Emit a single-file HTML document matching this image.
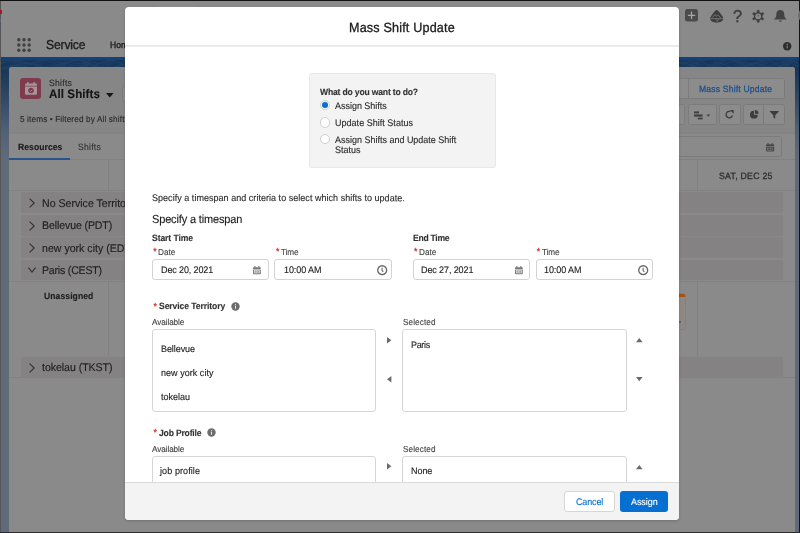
<!DOCTYPE html>
<html lang="en">
<head>
<meta charset="utf-8">
<title>Mass Shift Update</title>
<style>
html,body{margin:0;padding:0;}
body{width:800px;height:533px;position:relative;overflow:hidden;background:#8a8a8a;font-family:"Liberation Sans",sans-serif;}
.a{position:absolute;box-sizing:border-box;}
.t{position:absolute;white-space:pre;line-height:1;-webkit-text-stroke:0.12px currentColor;}
#page,#mcontent{will-change:transform;}
svg{position:absolute;overflow:visible;}
.row{position:absolute;left:21.2px;width:762px;background:#848282;border-radius:2px;}
.hl{position:absolute;height:1px;background:#838383;}
.vl{position:absolute;width:1px;background:#808080;}
.btn{position:absolute;box-sizing:border-box;border:1px solid #7b7b7b;border-radius:2.5px;background:#8c8c8c;}
.inp{position:absolute;box-sizing:border-box;border:1px solid #d3d3d3;border-radius:3px;background:#fff;height:21.4px;top:258.7px;}
.lb{position:absolute;box-sizing:border-box;border:1px solid #d6d6d6;border-radius:3px;background:#fff;}
.radio{position:absolute;box-sizing:border-box;width:10.6px;height:10.6px;border:1px solid #cfcfcf;border-radius:50%;background:#fff;}
</style>
</head>
<body>
<!-- ================= PAGE BEHIND THE BACKDROP ================= -->
<div id="page" class="a" style="left:0;top:0;width:800px;height:533px;">
  <!-- blue brand band + side strips -->
  <div class="a" style="left:0;top:57px;width:800px;height:476px;background:linear-gradient(180deg,#12427e 0px,#12427e 2.6px,#16375b 2.6px,#16375b 13px,#24405f 28px,#324a67 43px,#415570 58px,#506075 73px,#5a6678 88px,#606a79 103px,#606a7a 476px);"></div>
  <!-- topographic hints on band -->
  <svg width="800" height="11" style="left:0;top:59.6px;overflow:hidden" viewBox="0 0 800 11"><g fill="none" stroke="#26466a" stroke-width="0.6" opacity="0.85"><path d="M0.0 1.8L3.0 0.5L6.0 -0.7L9.0 -1.4L12.0 -1.5L15.0 -0.8L18.0 0.3L21.0 1.7L24.0 2.8L27.0 3.5L30.0 3.4L33.0 2.7L36.0 1.5L39.0 0.2L42.0 -1.0L45.0 -1.5L48.0 -1.4L51.0 -0.6L54.0 0.7L57.0 2.0L60.0 3.0L63.0 3.5L66.0 3.3L69.0 2.5L72.0 1.2L75.0 -0.1L78.0 -1.1L81.0 -1.6L84.0 -1.3L87.0 -0.3L90.0 1.0L93.0 2.3L96.0 3.2L99.0 3.6L102.0 3.2L105.0 2.2L108.0 0.9L111.0 -0.4L114.0 -1.3L117.0 -1.5L120.0 -1.1L123.0 -0.0L126.0 1.3"/><path d="M0.0 3.0L3.0 1.7L6.0 0.6L9.0 0.2L12.0 0.4L15.0 1.4L18.0 2.7L21.0 3.9L24.0 4.8L27.0 5.0L30.0 4.5L33.0 3.4L36.0 2.1L39.0 0.9L42.0 0.2L45.0 0.3L48.0 1.0L51.0 2.2L54.0 3.6L57.0 4.6L60.0 5.0L63.0 4.7L66.0 3.8L69.0 2.5L72.0 1.2L75.0 0.4L78.0 0.2L81.0 0.7L84.0 1.8L87.0 3.2L90.0 4.3L93.0 5.0L96.0 4.9L99.0 4.1L102.0 2.9L105.0 1.6L108.0 0.6L111.0 0.2L114.0 0.5L117.0 1.5L120.0 2.8L123.0 4.0L126.0 4.8"/><path d="M0.0 4.3L3.0 3.2L6.0 2.2L9.0 1.4L12.0 0.9L15.0 0.6L18.0 0.7L21.0 1.2L24.0 1.9L27.0 2.8L30.0 3.8L33.0 4.9L36.0 6.0L39.0 6.8L42.0 7.4L45.0 7.7L48.0 7.7L51.0 7.4L54.0 6.8L57.0 5.9L60.0 4.8L63.0 3.8L66.0 2.7L69.0 1.8L72.0 1.1L75.0 0.7L78.0 0.6L81.0 0.9L84.0 1.5L87.0 2.3L90.0 3.3L93.0 4.4L96.0 5.4L99.0 6.4L102.0 7.1L105.0 7.6L108.0 7.8L111.0 7.6L114.0 7.1L117.0 6.4L120.0 5.4L123.0 4.3L126.0 3.3"/><path d="M0.0 8.3L3.0 8.3L6.0 8.0L9.0 7.4L12.0 6.6L15.0 5.7L18.0 4.8L21.0 4.1L24.0 3.5L27.0 3.3L30.0 3.4L33.0 3.8L36.0 4.5L39.0 5.3L42.0 6.2L45.0 7.1L48.0 7.8L51.0 8.2L54.0 8.3L57.0 8.1L60.0 7.6L63.0 6.8L66.0 5.9L69.0 5.0L72.0 4.2L75.0 3.6L78.0 3.3L81.0 3.3L84.0 3.7L87.0 4.3L90.0 5.1L93.0 6.0L96.0 6.9L99.0 7.7L102.0 8.2L105.0 8.3L108.0 8.2L111.0 7.7L114.0 7.0L117.0 6.1L120.0 5.2L123.0 4.4L126.0 3.7"/><path d="M0.0 9.9L3.0 9.6L6.0 8.7L9.0 7.5L12.0 6.2L15.0 5.3L18.0 4.9L21.0 5.3L24.0 6.2L27.0 7.5L30.0 8.7L33.0 9.6L36.0 9.9L39.0 9.4L42.0 8.5L45.0 7.2L48.0 6.0L51.0 5.2L54.0 5.0L57.0 5.4L60.0 6.4L63.0 7.7L66.0 8.9L69.0 9.7L72.0 9.8L75.0 9.3L78.0 8.2L81.0 7.0L84.0 5.8L87.0 5.1L90.0 5.0L93.0 5.6L96.0 6.7L99.0 8.0L102.0 9.1L105.0 9.8L108.0 9.8L111.0 9.1L114.0 8.0L117.0 6.7L120.0 5.6L123.0 5.0L126.0 5.1"/><path d="M0.0 8.7L3.0 7.6L6.0 6.7L9.0 6.0L12.0 5.5L15.0 5.4L18.0 5.6L21.0 6.1L24.0 6.9L27.0 7.8L30.0 8.9L33.0 9.9L36.0 10.9L39.0 11.7L42.0 12.3L45.0 12.6L48.0 12.5L51.0 12.2L54.0 11.5L57.0 10.6L60.0 9.6L63.0 8.5L66.0 7.5L69.0 6.6L72.0 5.9L75.0 5.5L78.0 5.4L81.0 5.6L84.0 6.2L87.0 6.9L90.0 7.9L93.0 9.0L96.0 10.0L99.0 11.0L102.0 11.8L105.0 12.3L108.0 12.6L111.0 12.5L114.0 12.1L117.0 11.4L120.0 10.5L123.0 9.5L126.0 8.4"/><path d="M0.0 13.7L3.0 12.6L6.0 11.1L9.0 9.5L12.0 8.1L15.0 7.3L18.0 7.3L21.0 8.0L24.0 9.4L27.0 11.0L30.0 12.5L33.0 13.6L36.0 14.0L39.0 13.6L42.0 12.5L45.0 11.0L48.0 9.3L51.0 8.0L54.0 7.3L57.0 7.3L60.0 8.1L63.0 9.5L66.0 11.1L69.0 12.6L72.0 13.7L75.0 14.0L78.0 13.5L81.0 12.4L84.0 10.8L87.0 9.2L90.0 7.9L93.0 7.2L96.0 7.4L99.0 8.2L102.0 9.7L105.0 11.3L108.0 12.8L111.0 13.7L114.0 14.0L117.0 13.4L120.0 12.2L123.0 10.6L126.0 9.1"/><path d="M8.0 11L15.0 0"/><path d="M10.2 11L17.2 0"/><path d="M12.4 11L19.4 0"/><path d="M14.6 11L21.6 0"/><path d="M31.0 11L38.0 0"/><path d="M33.2 11L40.2 0"/><path d="M35.4 11L42.4 0"/><path d="M37.6 11L44.6 0"/><path d="M54.0 11L61.0 0"/><path d="M56.2 11L63.2 0"/><path d="M58.4 11L65.4 0"/><path d="M60.6 11L67.6 0"/><path d="M77.0 11L84.0 0"/><path d="M79.2 11L86.2 0"/><path d="M81.4 11L88.4 0"/><path d="M83.6 11L90.6 0"/><path d="M100.0 11L107.0 0"/><path d="M102.2 11L109.2 0"/><path d="M104.4 11L111.4 0"/><path d="M106.6 11L113.6 0"/><path d="M123.0 11L130.0 0"/><path d="M125.2 11L132.2 0"/><path d="M127.4 11L134.4 0"/><path d="M129.6 11L136.6 0"/><path d="M678.0 2.3L681.0 3.2L684.0 3.8L687.0 4.1L690.0 4.1L693.0 3.8L696.0 3.2L699.0 2.4L702.0 1.5L705.0 0.5L708.0 -0.5L711.0 -1.3L714.0 -1.8L717.0 -2.1L720.0 -2.1L723.0 -1.7L726.0 -1.1L729.0 -0.3L732.0 0.7L735.0 1.7L738.0 2.6L741.0 3.4L744.0 3.9L747.0 4.1L750.0 4.0L753.0 3.6L756.0 3.0L759.0 2.1L762.0 1.1L765.0 0.1L768.0 -0.8L771.0 -1.5L774.0 -2.0L777.0 -2.1L780.0 -2.0L783.0 -1.6L786.0 -0.9L789.0 0.0L792.0 1.0L795.0 2.0L798.0 2.9"/><path d="M678.0 6.1L681.0 5.7L684.0 4.3L687.0 2.5L690.0 0.7L693.0 -0.6L696.0 -0.9L699.0 -0.2L702.0 1.3L705.0 3.1L708.0 4.9L711.0 5.9L714.0 6.0L717.0 5.2L720.0 3.5L723.0 1.7L726.0 0.0L729.0 -0.8L732.0 -0.7L735.0 0.3L738.0 2.1L741.0 3.9L744.0 5.4L747.0 6.1L750.0 5.8L753.0 4.5L756.0 2.7L759.0 0.9L762.0 -0.5L765.0 -0.9L768.0 -0.4L771.0 1.0L774.0 2.9L777.0 4.7L780.0 5.8L783.0 6.1L786.0 5.3L789.0 3.8L792.0 1.9L795.0 0.2L798.0 -0.8"/><path d="M678.0 2.8L681.0 1.9L684.0 1.2L687.0 1.0L690.0 1.2L693.0 1.8L696.0 2.8L699.0 3.9L702.0 5.1L705.0 6.2L708.0 6.9L711.0 7.4L714.0 7.3L717.0 6.9L720.0 6.1L723.0 5.0L726.0 3.8L729.0 2.7L732.0 1.7L735.0 1.2L738.0 1.0L741.0 1.3L744.0 2.0L747.0 2.9L750.0 4.1L753.0 5.3L756.0 6.3L759.0 7.0L762.0 7.4L765.0 7.3L768.0 6.8L771.0 5.9L774.0 4.8L777.0 3.6L780.0 2.5L783.0 1.6L786.0 1.1L789.0 1.0L792.0 1.4L795.0 2.1L798.0 3.1"/><path d="M678.0 4.6L681.0 3.4L684.0 2.9L687.0 3.2L690.0 4.3L693.0 5.8L696.0 7.3L699.0 8.4L702.0 8.7L705.0 8.2L708.0 7.1L711.0 5.5L714.0 4.1L717.0 3.1L720.0 2.9L723.0 3.6L726.0 4.8L729.0 6.4L732.0 7.8L735.0 8.6L738.0 8.6L741.0 7.8L744.0 6.5L747.0 4.9L750.0 3.6L753.0 2.9L756.0 3.1L759.0 4.0L762.0 5.5L765.0 7.0L768.0 8.2L771.0 8.7L774.0 8.4L777.0 7.3L780.0 5.8L783.0 4.3L786.0 3.2L789.0 2.9L792.0 3.4L795.0 4.6L798.0 6.1"/><path d="M678.0 10.9L681.0 10.6L684.0 10.0L687.0 9.0L690.0 7.7L693.0 6.5L696.0 5.4L699.0 4.5L702.0 4.0L705.0 3.9L708.0 4.3L711.0 5.1L714.0 6.2L717.0 7.5L720.0 8.7L723.0 9.8L726.0 10.5L729.0 10.9L732.0 10.8L735.0 10.2L738.0 9.3L741.0 8.2L744.0 6.9L747.0 5.7L750.0 4.8L753.0 4.1L756.0 3.9L759.0 4.1L762.0 4.8L765.0 5.8L768.0 7.0L771.0 8.3L774.0 9.4L777.0 10.3L780.0 10.8L783.0 10.9L786.0 10.5L789.0 9.7L792.0 8.6L795.0 7.4L798.0 6.1"/><path d="M678.0 9.9L681.0 8.6L684.0 7.4L687.0 6.4L690.0 5.7L693.0 5.4L696.0 5.6L699.0 6.2L702.0 7.1L705.0 8.3L708.0 9.6L711.0 10.8L714.0 11.7L717.0 12.4L720.0 12.6L723.0 12.3L726.0 11.7L729.0 10.7L732.0 9.5L735.0 8.2L738.0 7.0L741.0 6.1L744.0 5.6L747.0 5.4L750.0 5.8L753.0 6.5L756.0 7.5L759.0 8.7L762.0 10.0L765.0 11.1L768.0 12.0L771.0 12.5L774.0 12.5L777.0 12.1L780.0 11.4L783.0 10.3L786.0 9.0L789.0 7.8L792.0 6.7L795.0 5.9L798.0 5.5"/><path d="M678.0 7.2L681.0 7.2L684.0 7.8L687.0 8.7L690.0 9.9L693.0 11.2L696.0 12.4L699.0 13.4L702.0 13.9L705.0 14.1L708.0 13.7L711.0 12.9L714.0 11.8L717.0 10.5L720.0 9.3L723.0 8.2L726.0 7.5L729.0 7.1L732.0 7.3L735.0 7.9L738.0 8.9L741.0 10.1L744.0 11.4L747.0 12.6L750.0 13.5L753.0 14.0L756.0 14.0L759.0 13.6L762.0 12.8L765.0 11.6L768.0 10.4L771.0 9.1L774.0 8.1L777.0 7.4L780.0 7.1L783.0 7.4L786.0 8.0L789.0 9.0L792.0 10.3L795.0 11.6L798.0 12.7"/><path d="M686.0 11L693.0 0"/><path d="M688.2 11L695.2 0"/><path d="M690.4 11L697.4 0"/><path d="M692.6 11L699.6 0"/><path d="M709.0 11L716.0 0"/><path d="M711.2 11L718.2 0"/><path d="M713.4 11L720.4 0"/><path d="M715.6 11L722.6 0"/><path d="M732.0 11L739.0 0"/><path d="M734.2 11L741.2 0"/><path d="M736.4 11L743.4 0"/><path d="M738.6 11L745.6 0"/><path d="M755.0 11L762.0 0"/><path d="M757.2 11L764.2 0"/><path d="M759.4 11L766.4 0"/><path d="M761.6 11L768.6 0"/><path d="M778.0 11L785.0 0"/><path d="M780.2 11L787.2 0"/><path d="M782.4 11L789.4 0"/><path d="M784.6 11L791.6 0"/></g></svg>
  <!-- list card -->
  <div class="a" style="left:9.4px;top:67.4px;width:786.1px;height:470px;background:#8a8a8a;border-radius:3px 3px 0 0;overflow:hidden;">
    <div class="a" style="left:0;top:0;width:100%;height:65.1px;background:#868686;"></div>
  </div>
  <!-- left/right dark edges -->
  <div class="a" style="left:0;top:0;width:1.1px;height:533px;background:#565659;"></div>
  <div class="a" style="left:0;top:10px;width:1.6px;height:4px;background:#a01f16;"></div>
  <div class="a" style="left:0;top:18.5px;width:1.3px;height:3px;background:#4a6a8a;"></div>
  <div class="a" style="left:799px;top:1px;width:1px;height:532px;background:#141414;"></div>
  <div class="a" style="left:0;top:0;width:800px;height:1.1px;background:#111;"></div>
  <div class="a" style="left:0;top:531.8px;width:800px;height:1.2px;background:#2c2c2e;"></div>

  <div class="a" style="left:153.5px;top:5.6px;width:42px;height:8px;border:1px solid #909090;border-radius:3px;"></div>
  <!-- app launcher -->
  <svg width="14" height="14" style="left:17px;top:37.8px" viewBox="0 0 14 14"><g fill="#404040"><circle cx="1.8" cy="1.8" r="1.7"/><circle cx="7" cy="1.8" r="1.7"/><circle cx="12.2" cy="1.8" r="1.7"/><circle cx="1.8" cy="7" r="1.7"/><circle cx="7" cy="7" r="1.7"/><circle cx="12.2" cy="7" r="1.7"/><circle cx="1.8" cy="12.2" r="1.7"/><circle cx="7" cy="12.2" r="1.7"/><circle cx="12.2" cy="12.2" r="1.7"/></g></svg>

  <!-- global header icons -->
  <svg width="13" height="12.6" style="left:685px;top:9.2px" viewBox="0 0 13 12.6"><rect width="13" height="12.6" rx="2.4" fill="#4b4b4b"/><path d="M6.5 2.6v7.4M2.8 6.3h7.4" stroke="#a6a6a6" stroke-width="1.3" fill="none"/></svg>
  <svg width="13.4" height="12.8" style="left:710px;top:9.8px" viewBox="0 0 13.4 12.8"><path d="M6.7 0.1C7.7 0.1 8.6 1 9.7 2.6C11 4.5 13.2 6.6 13.2 8.6C13.2 11.2 10.2 12.7 6.7 12.7C3.2 12.7 0.2 11.2 0.2 8.6C0.2 6.6 2.4 4.5 3.7 2.6C4.8 1 5.7 0.1 6.7 0.1Z" fill="#3e3e3e"/><path d="M0.6 8.7H12.8" stroke="#808080" stroke-width="0.8"/><path d="M2.2 7.6L5 4.6L6.4 6.4L7.8 5L10.8 7.8" fill="none" stroke="#7c7c7c" stroke-width="0.8"/><path d="M6 9L7 10.4L9 9.4M7 10.4L7.4 12.4" fill="none" stroke="#7c7c7c" stroke-width="0.7"/></svg>
  <span class="t" style="left:733.1px;top:8px;font-size:16.5px;color:#3f3f3f;-webkit-text-stroke:0.45px #3f3f3f;">?</span>
  <svg width="12.4" height="12.6" style="left:752.25px;top:9.8px" viewBox="-6.2 -6.3 12.4 12.6"><path d="M-1.20 -3.92L-0.85 -6.04L0.85 -6.04L1.20 -3.92L2.80 -3.00L4.81 -3.76L5.66 -2.29L3.99 -0.92L3.99 0.92L5.66 2.29L4.81 3.76L2.80 3.00L1.20 3.92L0.85 6.04L-0.85 6.04L-1.20 3.92L-2.80 3.00L-4.81 3.76L-5.66 2.29L-3.99 0.92L-3.99 -0.92L-5.66 -2.29L-4.81 -3.76L-2.80 -3.00Z" fill="#3f3f3f" stroke="#3f3f3f" stroke-width="0.5" stroke-linejoin="round"/><circle r="2.9" fill="#8a8a8a"/><circle cy="-0.5" r="0.7" fill="#4a4a4a"/></svg>
  <svg width="12.6" height="12" style="left:773.5px;top:10.1px" viewBox="0 0 12.6 12"><path d="M6.3 0C3.6 0 2.3 2 2.3 4.4C2.3 6.8 1.6 8 0.2 8.9V9.6H12.4V8.9C11 8 10.3 6.8 10.3 4.4C10.3 2 9 0 6.3 0Z" fill="#434343"/><path d="M5 10.4H7.6C7.6 11.2 7 11.8 6.3 11.8C5.6 11.8 5 11.2 5 10.4Z" fill="#434343"/></svg>
  <div class="a" style="left:797.7px;top:7.5px;width:15px;height:15px;border-radius:50%;background:#6b6b6b;"></div>
  <!-- info dot -->
  <svg width="8.4" height="8.4" style="left:783.3px;top:42.2px" viewBox="0 0 8.4 8.4"><circle cx="4.2" cy="4.2" r="4.2" fill="#2d2d2d"/><rect x="3.65" y="3.5" width="1.1" height="2.9" fill="#858585"/><circle cx="4.2" cy="2.3" r="0.7" fill="#858585"/></svg>

  <!-- Shifts object icon -->
  <div class="a" style="left:20.1px;top:78.1px;width:21px;height:21.2px;border-radius:3px;background:#803a4e;"></div>
  <svg width="12" height="12.8" style="left:24.8px;top:82.3px" viewBox="0 0 12 12.8"><g fill="#a3969b"><rect x="0" y="1.5" width="12" height="2.3" rx="0.8"/><rect x="2.1" y="0" width="1.7" height="2.6" rx="0.7"/><rect x="8.2" y="0" width="1.7" height="2.6" rx="0.7"/><path d="M0 4.5H12V11.7C12 12.3 11.5 12.8 10.9 12.8H1.1C0.5 12.8 0 12.3 0 11.7Z"/></g><circle cx="6" cy="8.6" r="2.75" fill="#803a4e"/><path d="M4.7 8.6L5.6 9.5L7.3 7.7" stroke="#a3969b" stroke-width="0.8" fill="none"/></svg>
  <svg width="7.6" height="4.6" style="left:106px;top:92.5px" viewBox="0 0 7.6 4.6"><path d="M0 0H7.6L3.8 4.6Z" fill="#161616"/></svg>
  <div class="btn" style="left:121.8px;top:86.4px;width:20px;height:15.6px;"></div>

  <!-- header buttons (right) -->
  <div class="btn" style="left:640px;top:78px;width:49px;height:21px;border-radius:2.5px 0 0 2.5px;"></div>
  <div class="btn" style="left:688px;top:78px;width:96.5px;height:21px;border-radius:0 2.5px 2.5px 0;"></div>
  <div class="btn" style="left:660px;top:104px;width:25px;height:21px;"></div>
  <div class="btn" style="left:688px;top:104px;width:29px;height:21px;"></div>
  <div class="btn" style="left:719px;top:104px;width:22px;height:21px;"></div>
  <div class="btn" style="left:743px;top:104px;width:41.5px;height:21px;"></div>
  <div class="vl" style="left:763.4px;top:104px;height:21px;background:#7b7b7b;"></div>
  <!-- gantt icon -->
  <svg width="17" height="9" style="left:693.6px;top:110.6px" viewBox="0 0 17 9"><g fill="#414141"><rect x="0" y="0.4" width="5" height="2"/><rect x="0" y="3.4" width="8.6" height="2.2"/><rect x="3.8" y="6.6" width="4.8" height="1.8"/><path d="M12.4 3.4H16.4L14.4 5.8Z"/></g></svg>
  <!-- refresh -->
  <svg width="9" height="9" style="left:725.3px;top:109.8px" viewBox="0 0 9 9"><path d="M7.4 5.3A3.2 3.2 0 1 1 5.4 1.6" fill="none" stroke="#3e3e3e" stroke-width="1.35"/><path d="M4.9 0H8.6V3.7Z" fill="#3e3e3e"/></svg>
  <!-- pie chart -->
  <svg width="8.6" height="8.6" style="left:749.7px;top:109.9px" viewBox="0 0 8.6 8.6"><path d="M3.9 0.8A3.9 3.9 0 1 0 7.8 4.7H3.9Z" fill="#3c3c3c"/><path d="M4.9 0A3.7 3.7 0 0 1 8.6 3.7H4.9Z" fill="#3c3c3c"/></svg>
  <!-- filter -->
  <svg width="8.6" height="7.8" style="left:769.5px;top:110.6px" viewBox="0 0 8.6 7.8"><path d="M0 0H8.6V0.8L5.2 4.2V7.8L3.4 6.6V4.2L0 0.8Z" fill="#3c3c3c"/></svg>

  <!-- date picker input -->
  <div class="btn" style="left:600px;top:136.2px;width:181.8px;height:20.8px;background:#8a8a8a;"></div>
  <svg width="8.2" height="8.6" style="left:765.9px;top:143.3px" viewBox="0 0 8.2 8.6"><g fill="#4a4a4a"><rect x="0" y="1.2" width="8.2" height="2" rx="0.5"/><rect x="1.4" y="0" width="1.2" height="2" rx="0.4"/><rect x="5.6" y="0" width="1.2" height="2" rx="0.4"/><path d="M0 3.8H8.2V7.8C8.2 8.2 7.9 8.6 7.4 8.6H0.8C0.3 8.6 0 8.2 0 7.8Z"/></g><rect x="1.5" y="5" width="5.2" height="2.2" fill="none" stroke="#8a8a8a" stroke-width="0.5"/><path d="M4.1 5V7.2" stroke="#8a8a8a" stroke-width="0.5"/></svg>

  <!-- lines -->
  <svg width="786" height="3" style="left:9.4px;top:131px" viewBox="0 0 786 3"><rect x="0" y="1.5" width="786" height="1" fill="#7d7d7d"/></svg>
  <div class="hl" style="left:9.4px;top:159.4px;width:786px;background:#808080;"></div>
  <div class="a" style="left:9.4px;top:158.2px;width:61px;height:2px;background:#28538f;"></div>
  <div class="hl" style="left:9.4px;top:190px;width:786px;background:#828282;"></div>
  <div class="hl" style="left:9.4px;top:281.2px;width:786px;background:#828282;"></div>
  <div class="hl" style="left:9.4px;top:377.2px;width:786px;background:#808080;"></div>
  <div class="vl" style="left:108px;top:160px;height:30px;"></div>
  <div class="vl" style="left:108px;top:281px;height:75px;"></div>
  <div class="vl" style="left:697.2px;top:160px;height:30px;"></div>
  <div class="vl" style="left:697.2px;top:281px;height:75px;"></div>

  <!-- territory rows -->
  <div class="row" style="top:191.8px;height:21.5px;"></div>
  <div class="row" style="top:214.9px;height:20.7px;"></div>
  <div class="row" style="top:237.1px;height:20.5px;"></div>
  <div class="row" style="top:259.6px;height:20.9px;"></div>
  <div class="row" style="top:356.8px;height:21.3px;"></div>
  <!-- chevrons -->
  <svg width="6" height="10" style="left:28.8px;top:198.4px" viewBox="0 0 6 10"><path d="M0.6 0.6L5.2 5L0.6 9.4" fill="none" stroke="#333" stroke-width="1.1"/></svg>
  <svg width="6" height="10" style="left:28.8px;top:220.8px" viewBox="0 0 6 10"><path d="M0.6 0.6L5.2 5L0.6 9.4" fill="none" stroke="#333" stroke-width="1.1"/></svg>
  <svg width="6" height="10" style="left:28.8px;top:243.2px" viewBox="0 0 6 10"><path d="M0.6 0.6L5.2 5L0.6 9.4" fill="none" stroke="#333" stroke-width="1.1"/></svg>
  <svg width="8" height="6" style="left:28px;top:267.2px" viewBox="0 0 8 6"><path d="M0.4 0.6L4 5.2L7.6 0.6" fill="none" stroke="#333" stroke-width="1.1"/></svg>
  <svg width="6" height="10" style="left:28.8px;top:363px" viewBox="0 0 6 10"><path d="M0.6 0.6L5.2 5L0.6 9.4" fill="none" stroke="#333" stroke-width="1.1"/></svg>

  <!-- orange shift card -->
  <div class="a" style="left:660px;top:293.3px;width:26.2px;height:36.4px;border-radius:2.5px;background:#8e8984;border:0.6px solid #86807b;overflow:hidden;"><div class="a" style="left:0;top:0;width:100%;height:2.9px;background:#aa5210;"></div></div>
  <div class="a" style="left:679.3px;top:321.2px;width:1.5px;height:1.7px;background:#4c688e;"></div>

<span class="t" style="left:45.70px;top:39.00px;font-size:12.2px;color:#1c1c1c;letter-spacing:-0.191px;transform-origin:0 10.00px;transform:scaleY(1.06) rotate(0.03deg);-webkit-text-stroke:0.3px #1c1c1c;">Service</span>
<span class="t" style="left:109.60px;top:40.70px;font-size:8.6px;color:#1a1a1a;transform-origin:0 7.00px;transform:scaleY(1.06) rotate(0.03deg);-webkit-text-stroke:0.3px #1a1a1a;">Home</span>
<span class="t" style="left:49.00px;top:79.20px;font-size:8.6px;color:#2a2a2a;letter-spacing:0.273px;transform-origin:0 7.00px;transform:scaleY(1.06) rotate(0.03deg);">Shifts</span>
<span class="t" style="left:49.00px;top:88.10px;font-size:11.6px;color:#141414;font-weight:700;letter-spacing:0.079px;transform-origin:0 10.00px;transform:scaleY(1.06) rotate(0.03deg);">All Shifts</span>
<span class="t" style="left:20.30px;top:116.40px;font-size:8.2px;color:#2a2a2a;letter-spacing:0.139px;transform-origin:0 6.00px;transform:scaleY(1.06) rotate(0.03deg);">5 items • Filtered by All shifts • Updated a few seconds ago</span>
<span class="t" style="left:17.60px;top:143.20px;font-size:8.6px;color:#1a1a1a;font-weight:700;letter-spacing:0.053px;transform-origin:0 7.00px;transform:scaleY(1.06) rotate(0.03deg);">Resources</span>
<span class="t" style="left:78.00px;top:143.20px;font-size:8.6px;color:#333;letter-spacing:0.236px;transform-origin:0 7.00px;transform:scaleY(1.06) rotate(0.03deg);">Shifts</span>
<span class="t" style="left:42.00px;top:197.60px;font-size:10.6px;color:#1e1e1e;transform-origin:0 9.00px;transform:scaleY(1.06) rotate(0.03deg);">No Service Territory</span>
<span class="t" style="left:42.00px;top:220.10px;font-size:10.6px;color:#1e1e1e;letter-spacing:-0.121px;transform-origin:0 9.00px;transform:scaleY(1.06) rotate(0.03deg);">Bellevue (PDT)</span>
<span class="t" style="left:42.00px;top:242.60px;font-size:10.6px;color:#1e1e1e;transform-origin:0 9.00px;transform:scaleY(1.06) rotate(0.03deg);">new york city (EDT)</span>
<span class="t" style="left:42.30px;top:265.10px;font-size:10.6px;color:#1e1e1e;letter-spacing:-0.208px;transform-origin:0 9.00px;transform:scaleY(1.06) rotate(0.03deg);">Paris (CEST)</span>
<span class="t" style="left:42.00px;top:362.00px;font-size:10.6px;color:#1e1e1e;letter-spacing:-0.054px;transform-origin:0 9.00px;transform:scaleY(1.06) rotate(0.03deg);">tokelau (TKST)</span>
<span class="t" style="left:44.10px;top:292.40px;font-size:8.6px;color:#1e1e1e;font-weight:700;letter-spacing:0.072px;transform-origin:0 7.00px;transform:scaleY(1.06) rotate(0.03deg);">Unassigned</span>
<span class="t" style="left:699.40px;top:85.40px;font-size:8.6px;color:#1d4f88;letter-spacing:0.175px;transform-origin:0 7.00px;transform:scaleY(1.06) rotate(0.03deg);-webkit-text-stroke:0.25px #1d4f88;">Mass Shift Update</span>
<span class="t" style="left:719.00px;top:172.20px;font-size:8.7px;color:#2e2e2e;letter-spacing:0.281px;transform-origin:0 7.00px;transform:scaleY(1.06) rotate(0.03deg);-webkit-text-stroke:0.3px #2e2e2e;">SAT, DEC 25</span>
</div>

<!-- ================= MODAL ================= -->
<div id="modal" class="a" style="left:125.3px;top:7px;width:553.3px;height:512.8px;background:#fff;border-radius:4px;overflow:hidden;box-shadow:0 1px 3px rgba(0,0,0,.18);">
  <div class="a" style="left:0;top:38px;width:100%;height:2px;background:linear-gradient(180deg,#e6e6e6,#eeeeee);"></div>
  <!-- job profile list boxes (clipped by footer) -->
  <div class="lb" style="left:26.3px;top:449.2px;width:224.4px;height:60px;"></div>
  <div class="lb" style="left:276.7px;top:449.2px;width:225px;height:60px;"></div>
  <!-- footer -->
  <div class="a" style="left:0;top:474.6px;width:100%;height:39px;background:#f3f3f3;border-top:1px solid #dcdcdc;"></div>
  <div class="a" style="left:438.9px;top:484.1px;width:50.6px;height:21.3px;background:#fff;border:1px solid #d6d6d6;border-radius:3px;"></div>
  <div class="a" style="left:494.5px;top:484.1px;width:48.6px;height:21.3px;background:#0570d2;border-radius:3px;"></div>
</div>

<div id="mcontent" class="a" style="left:0;top:0;width:800px;height:533px;">
  <!-- radio group panel -->
  <div class="a" style="left:308.8px;top:72.7px;width:187.6px;height:94.9px;background:#f3f3f3;border:1px solid #e8e8e8;border-radius:3px;"></div>
  <div class="radio" style="left:319.8px;top:99.9px;"><div class="a" style="left:1.5px;top:1.5px;width:5.6px;height:5.6px;border-radius:50%;background:#0a6fd1;"></div></div>
  <div class="radio" style="left:319.8px;top:117.3px;"></div>
  <div class="radio" style="left:319.8px;top:133.8px;"></div>

  <!-- date/time inputs -->
  <div class="inp" style="left:152.2px;width:117px;"></div>
  <div class="inp" style="left:274.4px;width:117.4px;"></div>
  <div class="inp" style="left:413px;width:117.2px;"></div>
  <div class="inp" style="left:535.8px;width:117px;"></div>
  <!-- calendar icons -->
  <svg width="7.8" height="8.2" style="left:253.4px;top:265.8px" viewBox="0 0 8.2 8.6"><g><g fill="#7a7a7a"><rect x="0" y="1.2" width="8.2" height="2" rx="0.5"/><rect x="1.4" y="0" width="1.2" height="2" rx="0.4"/><rect x="5.6" y="0" width="1.2" height="2" rx="0.4"/><path d="M0 3.8H8.2V7.8C8.2 8.2 7.9 8.6 7.4 8.6H0.8C0.3 8.6 0 8.2 0 7.8Z"/></g><rect x="1.5" y="4.9" width="5.2" height="2.4" fill="none" stroke="#fff" stroke-width="0.55"/><path d="M4.1 4.9V7.3M1.5 6.1H6.7" stroke="#fff" stroke-width="0.5"/></g></svg>
  <svg width="7.8" height="8.2" style="left:514.6px;top:265.8px" viewBox="0 0 8.2 8.6"><g><g fill="#7a7a7a"><rect x="0" y="1.2" width="8.2" height="2" rx="0.5"/><rect x="1.4" y="0" width="1.2" height="2" rx="0.4"/><rect x="5.6" y="0" width="1.2" height="2" rx="0.4"/><path d="M0 3.8H8.2V7.8C8.2 8.2 7.9 8.6 7.4 8.6H0.8C0.3 8.6 0 8.2 0 7.8Z"/></g><rect x="1.5" y="4.9" width="5.2" height="2.4" fill="none" stroke="#fff" stroke-width="0.55"/><path d="M4.1 4.9V7.3M1.5 6.1H6.7" stroke="#fff" stroke-width="0.5"/></g></svg>
  
  <!-- clock icons -->
  <svg width="10.4" height="10.4" style="left:377.2px;top:264.8px" viewBox="0 0 9.2 9.2"><g><circle cx="4.6" cy="4.6" r="3.95" fill="none" stroke="#686868" stroke-width="1.2"/><path d="M4.5 2.5V4.7L5.5 6.2" fill="none" stroke="#686868" stroke-width="1"/></g></svg>
  <svg width="10.4" height="10.4" style="left:638.2px;top:264.8px" viewBox="0 0 9.2 9.2"><g><circle cx="4.6" cy="4.6" r="3.95" fill="none" stroke="#686868" stroke-width="1.2"/><path d="M4.5 2.5V4.7L5.5 6.2" fill="none" stroke="#686868" stroke-width="1"/></g></svg>
  <!-- info icons -->
  <svg width="9" height="9" style="left:231px;top:301.9px" viewBox="0 0 9 9"><g><circle cx="4.5" cy="4.5" r="4.2" fill="#6e6e6e"/><rect x="4" y="3.9" width="1" height="2.8" fill="#e6e6e6"/><circle cx="4.5" cy="2.7" r="0.6" fill="#e6e6e6"/></g></svg>
  <svg width="9" height="9" style="left:206.9px;top:428.2px" viewBox="0 0 9 9"><g><circle cx="4.5" cy="4.5" r="4.2" fill="#6e6e6e"/><rect x="4" y="3.9" width="1" height="2.8" fill="#e6e6e6"/><circle cx="4.5" cy="2.7" r="0.6" fill="#e6e6e6"/></g></svg>

  <!-- service territory list boxes -->
  <div class="lb" style="left:151.6px;top:329.4px;width:224.4px;height:82.3px;"></div>
  <div class="lb" style="left:402px;top:329.4px;width:225px;height:82.3px;"></div>
  <!-- move arrows -->
  <svg width="4.4" height="6.6" style="left:386.8px;top:336.5px" viewBox="0 0 4.4 6.6"><path d="M0 0L4.4 3.3L0 6.6Z" fill="#6b6b6b"/></svg>
  <svg width="4.4" height="6.6" style="left:386.6px;top:376.4px" viewBox="0 0 4.4 6.6"><path d="M4.4 0L0 3.3L4.4 6.6Z" fill="#6b6b6b"/></svg>
  <svg width="6.6" height="4.2" style="left:635.7px;top:338.1px" viewBox="0 0 6.6 4.2"><path d="M0 4.2L3.3 0L6.6 4.2Z" fill="#6b6b6b"/></svg>
  <svg width="6.6" height="4.2" style="left:635.7px;top:377.3px" viewBox="0 0 6.6 4.2"><path d="M0 0L3.3 4.2L6.6 0Z" fill="#6b6b6b"/></svg>
  <svg width="4.4" height="6.6" style="left:386.8px;top:463.4px" viewBox="0 0 4.4 6.6"><path d="M0 0L4.4 3.3L0 6.6Z" fill="#6b6b6b"/></svg>
  <svg width="6.6" height="4.2" style="left:635.7px;top:464.6px" viewBox="0 0 6.6 4.2"><path d="M0 4.2L3.3 0L6.6 4.2Z" fill="#6b6b6b"/></svg>

<span class="t" style="left:349.30px;top:21.60px;font-size:12.6px;color:#1a1a1a;letter-spacing:0.175px;transform-origin:0 10.00px;transform:scaleY(1.06) rotate(0.03deg);-webkit-text-stroke:0.3px #1a1a1a;">Mass Shift Update</span>
<span class="t" style="left:319.50px;top:88.45px;font-size:8.6px;color:#333;font-weight:700;letter-spacing:-0.185px;transform-origin:0 7.00px;transform:scaleY(1.06) rotate(0.03deg);">What do you want to do?</span>
<span class="t" style="left:335.40px;top:101.80px;font-size:9px;color:#2b2b2b;letter-spacing:-0.026px;transform-origin:0 7.00px;transform:scaleY(1.06) rotate(0.03deg);">Assign Shifts</span>
<span class="t" style="left:335.40px;top:119.00px;font-size:9px;color:#2b2b2b;letter-spacing:0.024px;transform-origin:0 7.00px;transform:scaleY(1.06) rotate(0.03deg);">Update Shift Status</span>
<span class="t" style="left:335.40px;top:135.50px;font-size:9px;color:#2b2b2b;letter-spacing:-0.009px;transform-origin:0 7.00px;transform:scaleY(1.06) rotate(0.03deg);">Assign Shifts and Update Shift</span>
<span class="t" style="left:335.40px;top:145.70px;font-size:9px;color:#2b2b2b;letter-spacing:-0.021px;transform-origin:0 7.00px;transform:scaleY(1.06) rotate(0.03deg);">Status</span>
<span class="t" style="left:152.20px;top:193.90px;font-size:9px;color:#2b2b2b;letter-spacing:0.033px;transform-origin:0 7.00px;transform:scaleY(1.06) rotate(0.03deg);">Specify a timespan and criteria to select which shifts to update.</span>
<span class="t" style="left:152.30px;top:213.70px;font-size:11px;color:#1a1a1a;letter-spacing:-0.156px;transform-origin:0 9.00px;transform:scaleY(1.06) rotate(0.03deg);">Specify a timespan</span>
<span class="t" style="left:152.20px;top:233.80px;font-size:8.6px;color:#333;font-weight:700;letter-spacing:-0.092px;transform-origin:0 7.00px;transform:scaleY(1.06) rotate(0.03deg);">Start Time</span>
<span class="t" style="left:413.10px;top:233.70px;font-size:8.6px;color:#333;font-weight:700;letter-spacing:-0.284px;transform-origin:0 7.00px;transform:scaleY(1.06) rotate(0.03deg);">End Time</span>
<span class="t" style="left:158.20px;top:248.70px;font-size:8.2px;color:#444;letter-spacing:-0.028px;transform-origin:0 6.00px;transform:scaleY(1.06) rotate(0.03deg);">Date</span>
<span class="t" style="left:281.00px;top:248.70px;font-size:8.2px;color:#444;letter-spacing:-0.112px;transform-origin:0 6.00px;transform:scaleY(1.06) rotate(0.03deg);">Time</span>
<span class="t" style="left:419.20px;top:248.70px;font-size:8.2px;color:#444;letter-spacing:-0.028px;transform-origin:0 6.00px;transform:scaleY(1.06) rotate(0.03deg);">Date</span>
<span class="t" style="left:541.80px;top:248.70px;font-size:8.2px;color:#444;letter-spacing:-0.112px;transform-origin:0 6.00px;transform:scaleY(1.06) rotate(0.03deg);">Time</span>
<span class="t" style="left:160.60px;top:266.00px;font-size:9px;color:#222;letter-spacing:-0.117px;transform-origin:0 7.00px;transform:scaleY(1.06) rotate(0.03deg);">Dec 20, 2021</span>
<span class="t" style="left:283.50px;top:266.00px;font-size:9px;color:#222;letter-spacing:-0.071px;transform-origin:0 7.00px;transform:scaleY(1.06) rotate(0.03deg);">10:00 AM</span>
<span class="t" style="left:421.40px;top:266.00px;font-size:9px;color:#222;letter-spacing:-0.100px;transform-origin:0 7.00px;transform:scaleY(1.06) rotate(0.03deg);">Dec 27, 2021</span>
<span class="t" style="left:544.20px;top:266.00px;font-size:9px;color:#222;letter-spacing:-0.071px;transform-origin:0 7.00px;transform:scaleY(1.06) rotate(0.03deg);">10:00 AM</span>
<span class="t" style="left:158.70px;top:302.30px;font-size:8.6px;color:#333;font-weight:700;letter-spacing:-0.089px;transform-origin:0 7.00px;transform:scaleY(1.06) rotate(0.03deg);">Service Territory</span>
<span class="t" style="left:152.20px;top:319.10px;font-size:8.2px;color:#444;letter-spacing:-0.092px;transform-origin:0 6.00px;transform:scaleY(1.06) rotate(0.03deg);">Available</span>
<span class="t" style="left:402.60px;top:318.90px;font-size:8.2px;color:#444;letter-spacing:0.083px;transform-origin:0 6.00px;transform:scaleY(1.06) rotate(0.03deg);">Selected</span>
<span class="t" style="left:160.60px;top:344.50px;font-size:9px;color:#222;letter-spacing:-0.071px;transform-origin:0 7.00px;transform:scaleY(1.06) rotate(0.03deg);">Bellevue</span>
<span class="t" style="left:160.50px;top:368.60px;font-size:9px;color:#222;letter-spacing:0.039px;transform-origin:0 7.00px;transform:scaleY(1.06) rotate(0.03deg);">new york city</span>
<span class="t" style="left:160.50px;top:392.60px;font-size:9px;color:#222;letter-spacing:-0.005px;transform-origin:0 7.00px;transform:scaleY(1.06) rotate(0.03deg);">tokelau</span>
<span class="t" style="left:411.10px;top:340.90px;font-size:9px;color:#222;letter-spacing:-0.337px;transform-origin:0 7.00px;transform:scaleY(1.06) rotate(0.03deg);">Paris</span>
<span class="t" style="left:158.70px;top:429.00px;font-size:8.6px;color:#333;font-weight:700;letter-spacing:-0.193px;transform-origin:0 7.00px;transform:scaleY(1.06) rotate(0.03deg);">Job Profile</span>
<span class="t" style="left:152.20px;top:445.80px;font-size:8.2px;color:#444;letter-spacing:-0.092px;transform-origin:0 6.00px;transform:scaleY(1.06) rotate(0.03deg);">Available</span>
<span class="t" style="left:402.60px;top:445.80px;font-size:8.2px;color:#444;letter-spacing:0.083px;transform-origin:0 6.00px;transform:scaleY(1.06) rotate(0.03deg);">Selected</span>
<span class="t" style="left:160.40px;top:467.10px;font-size:9px;color:#222;letter-spacing:0.092px;transform-origin:0 7.00px;transform:scaleY(1.06) rotate(0.03deg);">job profile</span>
<span class="t" style="left:410.90px;top:467.10px;font-size:9px;color:#222;letter-spacing:-0.062px;transform-origin:0 7.00px;transform:scaleY(1.06) rotate(0.03deg);">None</span>
<span class="t" style="left:575.75px;top:498.15px;font-size:9px;color:#0b6fd0;letter-spacing:-0.130px;transform-origin:0 7.00px;transform:scaleY(1.06) rotate(0.03deg);">Cancel</span>
<span class="t" style="left:630.90px;top:498.15px;font-size:9px;color:#ffffff;letter-spacing:-0.076px;transform-origin:0 7.00px;transform:scaleY(1.06) rotate(0.03deg);">Assign</span>
<span class="t" style="left:153.28px;top:246.93px;font-size:8.8px;color:#d23a2f;-webkit-text-stroke:0.3px #d23a2f;">*</span>
<span class="t" style="left:275.88px;top:246.93px;font-size:8.8px;color:#d23a2f;-webkit-text-stroke:0.3px #d23a2f;">*</span>
<span class="t" style="left:414.08px;top:246.93px;font-size:8.8px;color:#d23a2f;-webkit-text-stroke:0.3px #d23a2f;">*</span>
<span class="t" style="left:536.68px;top:246.93px;font-size:8.8px;color:#d23a2f;-webkit-text-stroke:0.3px #d23a2f;">*</span>
<span class="t" style="left:153.38px;top:301.63px;font-size:8.8px;color:#d23a2f;-webkit-text-stroke:0.3px #d23a2f;">*</span>
<span class="t" style="left:153.38px;top:428.33px;font-size:8.8px;color:#d23a2f;-webkit-text-stroke:0.3px #d23a2f;">*</span>
</div>
</body>
</html>
